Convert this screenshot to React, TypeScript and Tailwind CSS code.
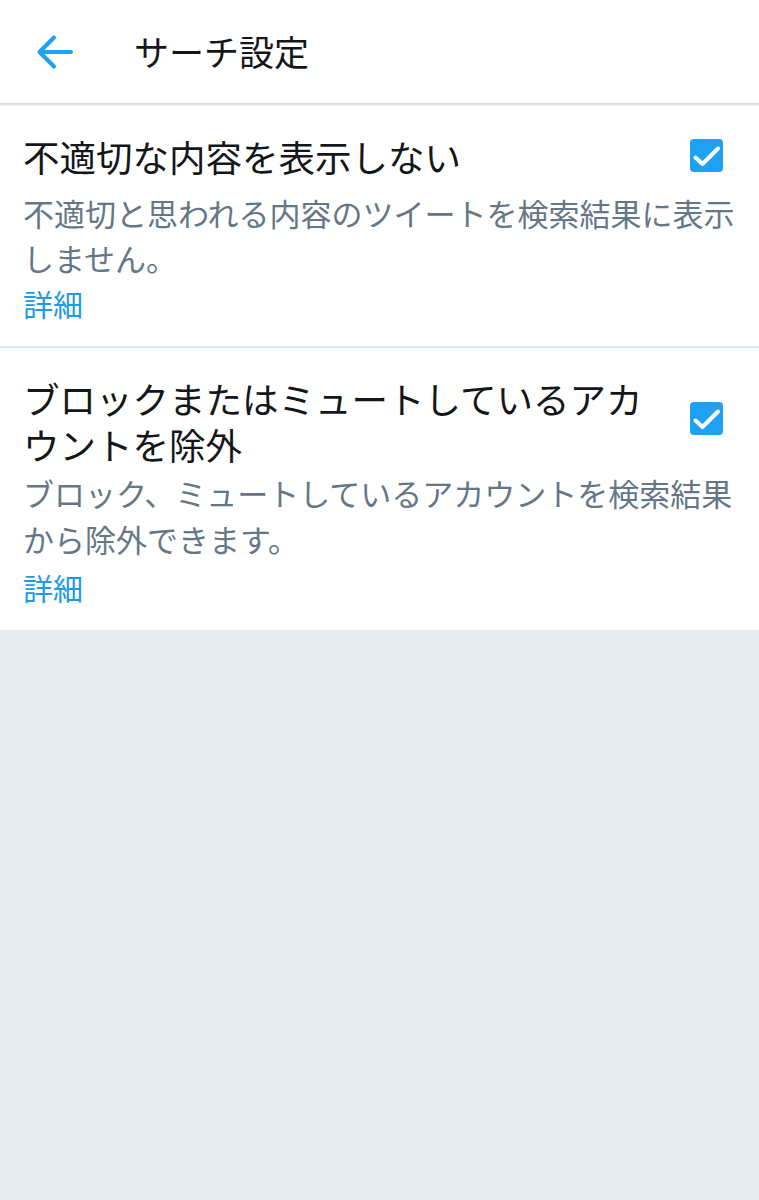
import React from "react";

const font = { fontFamily: '"Noto Sans CJK JP", "Noto Sans", sans-serif' };

function Check({ className = "" }: { className?: string }) {
  return (
    <div className={`w-[33px] h-[33px] rounded-[4px] bg-[#1da1f2] flex items-center justify-center shrink-0 ${className}`}>
      <svg width="33" height="33" viewBox="0 0 33 33">
        <path d="M5.5 18.5 L12.5 25 L28 9.5" fill="none" stroke="#fff" strokeWidth="4" strokeLinecap="round" strokeLinejoin="round" />
      </svg>
    </div>
  );
}

export default function App() {
  return (
    <div className="w-[759px] min-h-[1200px] bg-[#e6ecf0]" style={font}>
      <header className="h-[103px] bg-white flex items-center">
        <div className="w-[134px] pl-[36px] flex items-center">
          <svg width="38" height="38" viewBox="0 0 38 38">
            <path d="M35 19 H4 M18 4.5 L3.5 19 L18 33.5" fill="none" stroke="#1da1f2" strokeWidth="4" strokeLinecap="round" strokeLinejoin="round" />
          </svg>
        </div>
        <h1 className="text-[35px] leading-none text-[#14171a] font-normal -mt-[2px]">サーチ設定</h1>
      </header>
      <div className="h-[3px] bg-gradient-to-b from-[#d4d4d4] to-[#f2f2f2]" />

      <section className="bg-white pl-[23px] pr-[22px] pt-[28px] pb-[20px]">
        <div className="flex items-center pr-[14px]">
          <div className="flex-1 text-[36.5px] leading-[45px] text-[#14171a]">不適切な内容を表示しない</div>
          <Check className="-mt-[2px]" />
        </div>
        <p className="mt-[11px] text-[31px] leading-[45px] text-[#657786]">
          不適切と思われる内容のツイートを検索結果に表示しません。
        </p>
        <div className="mt-[0px] text-[30px] leading-[46px] text-[#1d9ae6]">詳細</div>
      </section>
      <div className="h-[2px] bg-[#e1e8ed]" />

      <section className="bg-white pl-[23px] pr-[22px] pt-[28px] pb-[20px]">
        <div className="flex items-center pr-[14px]">
          <div className="w-[630px] mr-[38px] text-[36.5px] leading-[46px] text-[#14171a]">
            ブロックまたはミュートしているアカウントを除外
          </div>
          <Check className="-mt-[7px]" />
        </div>
        <p className="mt-[2px] text-[31px] leading-[46px] text-[#657786]">
          ブロック、ミュートしているアカウントを検索結果から除外できます。
        </p>
        <div className="mt-[2px] text-[30px] leading-[46px] text-[#1d9ae6]">詳細</div>
      </section>
    </div>
  );
}
